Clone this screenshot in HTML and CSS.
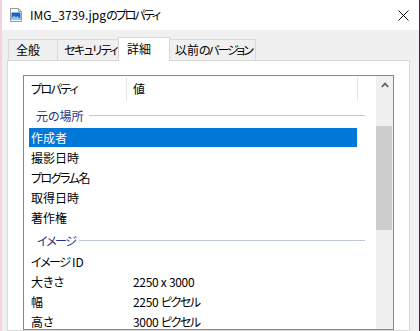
FILE: index.html
```html
<!DOCTYPE html>
<html lang="ja">
<head>
<meta charset="utf-8">
<title>プロパティ</title>
<link rel="stylesheet" href="styles.css">
</head>
<body>
<div class="window">
  <div class="titlebar">
    <svg class="file-icon" width="12" height="14" viewBox="0 0 12 14">
      <path d="M0.5 0.5h8l3 3v10h-11z" fill="#fff" stroke="#9a9a9a"/>
      <path d="M8.5 0.5v3h3" fill="none" stroke="#9a9a9a"/>
      <rect x="1.5" y="4.5" width="9" height="7.5" fill="#1565c0"/>
      <path d="M1.5 10.5l2.5-3 2 2 1.5-1.5 3 3v1h-9z" fill="#8cc4ef"/>
    </svg>
    <span class="title">IMG_3739.jpg<span class="kana-title">のプロパティ</span></span>
    <svg class="close" width="11" height="11" viewBox="0 0 11 11">
      <path d="M0.5 0.5l10 10M10.5 0.5l-10 10" stroke="#111" stroke-width="1"/>
    </svg>
  </div>
  <div class="body">
    <div class="tabs">
      <div class="tab tab-general">全般</div>
      <div class="tab tab-security"><span class="kana">セキュリティ</span></div>
      <div class="tab tab-details active">詳細</div>
      <div class="tab tab-previous">以前<span class="kana-tight">のバージョン</span></div>
    </div>
    <div class="panel">
      <div class="listbox">
        <div class="list">
          <div class="header">
            <div class="hcell hcell-name"><span class="kana">プロパティ</span></div>
            <div class="hcell hcell-value">値</div>
          </div>
          <div class="group group-origin"><span>元の場所</span><i class="rule"></i></div>
          <div class="row selected"><span class="name">作成者</span><span class="value"></span></div>
          <div class="row"><span class="name">撮影日時</span><span class="value"></span></div>
          <div class="row"><span class="name"><span class="kana">プログラム</span>名</span><span class="value"></span></div>
          <div class="row"><span class="name">取得日時</span><span class="value"></span></div>
          <div class="row"><span class="name">著作権</span><span class="value"></span></div>
          <div class="group group-image"><span class="kana">イメージ</span><i class="rule"></i></div>
          <div class="row"><span class="name"><span class="kana">イメージ</span> ID</span><span class="value"></span></div>
          <div class="row"><span class="name">大きさ</span><span class="value">2250 x 3000</span></div>
          <div class="row"><span class="name">幅</span><span class="value">2250 <span class="kana">ピクセル</span></span></div>
          <div class="row"><span class="name">高さ</span><span class="value">3000 <span class="kana">ピクセル</span></span></div>
        </div>
        <div class="scrollbar">
          <div class="arrow">
            <svg width="8" height="6" viewBox="0 0 8 6"><path d="M0.8 5L4 1.6 7.2 5" fill="none" stroke="#606060" stroke-width="1.8"/></svg>
          </div>
          <div class="track"><div class="thumb"></div></div>
        </div>
      </div>
    </div>
  </div>
</div>
</body>
</html>
```
FILE: styles.css
```css
html, body {
  margin: 0;
  padding: 0;
  background: #f0f0f0;
}
body {
  font-family: "Noto Sans CJK JP", "Noto Sans", sans-serif;
  font-size: 12px;
  font-feature-settings: "palt";
  color: #000;
}
.kana {
  letter-spacing: -1.5px;
}
.kana-tight {
  letter-spacing: -2.2px;
}
.kana-title {
  letter-spacing: -2px;
}
.window {
  width: 420px;
  height: 331px;
  box-sizing: border-box;
  border-left: 2px solid #f2d4dd;
  border-right: 1px solid #4f2233;
  background: #f0f0f0;
  overflow: hidden;
  display: flex;
  flex-direction: column;
}
.titlebar {
  flex: none;
  height: 30px;
  background: #fff;
  display: flex;
  align-items: center;
}
.file-icon {
  margin-left: 8px;
  margin-top: -1px;
  flex: none;
}
.title {
  margin-left: 8px;
  line-height: 16px;
  white-space: nowrap;
}
.close {
  margin-left: auto;
  margin-right: 10px;
  flex: none;
}
.body {
  flex: 1;
  display: flex;
  flex-direction: column;
  padding: 7px 9px 0 5px;
  min-height: 0;
}
.tabs {
  flex: none;
  height: 23px;
  display: flex;
  align-items: flex-end;
  padding-left: 1px;
  position: relative;
  z-index: 1;
}
.tab {
  box-sizing: border-box;
  height: 21px;
  border: 1px solid #d9d9d9;
  border-bottom: none;
  background: #f0f0f0;
  line-height: 20px;
  padding-left: 6px;
  margin-right: -1px;
  white-space: nowrap;
  overflow: hidden;
}
.tab-general { width: 50px; padding-left: 7px; }
.tab-security { width: 62px; }
.tab-details { width: 52px; }
.tab-previous { width: 87px; padding-left: 5px; }
.tab.active {
  height: 24px;
  background: #fff;
  margin-bottom: -1px;
  padding-top: 1px;
  padding-left: 8px;
  line-height: 20px;
  position: relative;
  z-index: 2;
}
.panel {
  flex: 1;
  background: #fff;
  border: 1px solid #d9d9d9;
  padding: 14px 15px 0 15px;
  display: flex;
  flex-direction: column;
  min-height: 0;
}
.listbox {
  flex: 1;
  border: 1px solid #828790;
  display: flex;
  overflow: hidden;
  min-height: 0;
}
.list {
  width: 352px;
  flex: none;
}
.header {
  height: 26px;
  display: flex;
  align-items: flex-start;
}
.hcell {
  box-sizing: border-box;
  margin-top: 1px;
  height: 24px;
  line-height: 24px;
  border-right: 1px solid #e5e5e5;
  white-space: nowrap;
}
.hcell-name {
  width: 103px;
  padding-left: 7px;
}
.hcell-value {
  width: 231px;
  padding-left: 6px;
}
.group {
  display: flex;
  align-items: center;
  margin-left: 5px;
  width: 336px;
  box-sizing: border-box;
  padding-left: 7px;
  color: #1e3287;
  white-space: nowrap;
}
.group-origin { height: 26px; }
.group-image { height: 24px; padding-left: 8px; }
.rule {
  flex: 1;
  height: 1px;
  background: #bfc8d9;
  margin-left: 5px;
}
.group-image .rule { margin-left: 4px; }
.row {
  display: flex;
  height: 19px;
  line-height: 19px;
  margin: 0 0 1px 5px;
  width: 328px;
  white-space: nowrap;
}
.row .name {
  box-sizing: border-box;
  width: 104px;
  padding-left: 2px;
  flex: none;
}
.row .value {
  letter-spacing: -0.3px;
}
.row.selected {
  background: #0078d7;
  color: #fff;
}
.scrollbar {
  width: 17px;
  flex: none;
  background: #f0f0f0;
  display: flex;
  flex-direction: column;
}
.arrow {
  height: 17px;
  display: flex;
  align-items: center;
  justify-content: center;
  padding-top: 1px;
  box-sizing: border-box;
}
.track {
  flex: 1;
  padding-top: 33px;
}
.thumb {
  width: 16px;
  height: 104px;
  background: #cdcdcd;
}
```
